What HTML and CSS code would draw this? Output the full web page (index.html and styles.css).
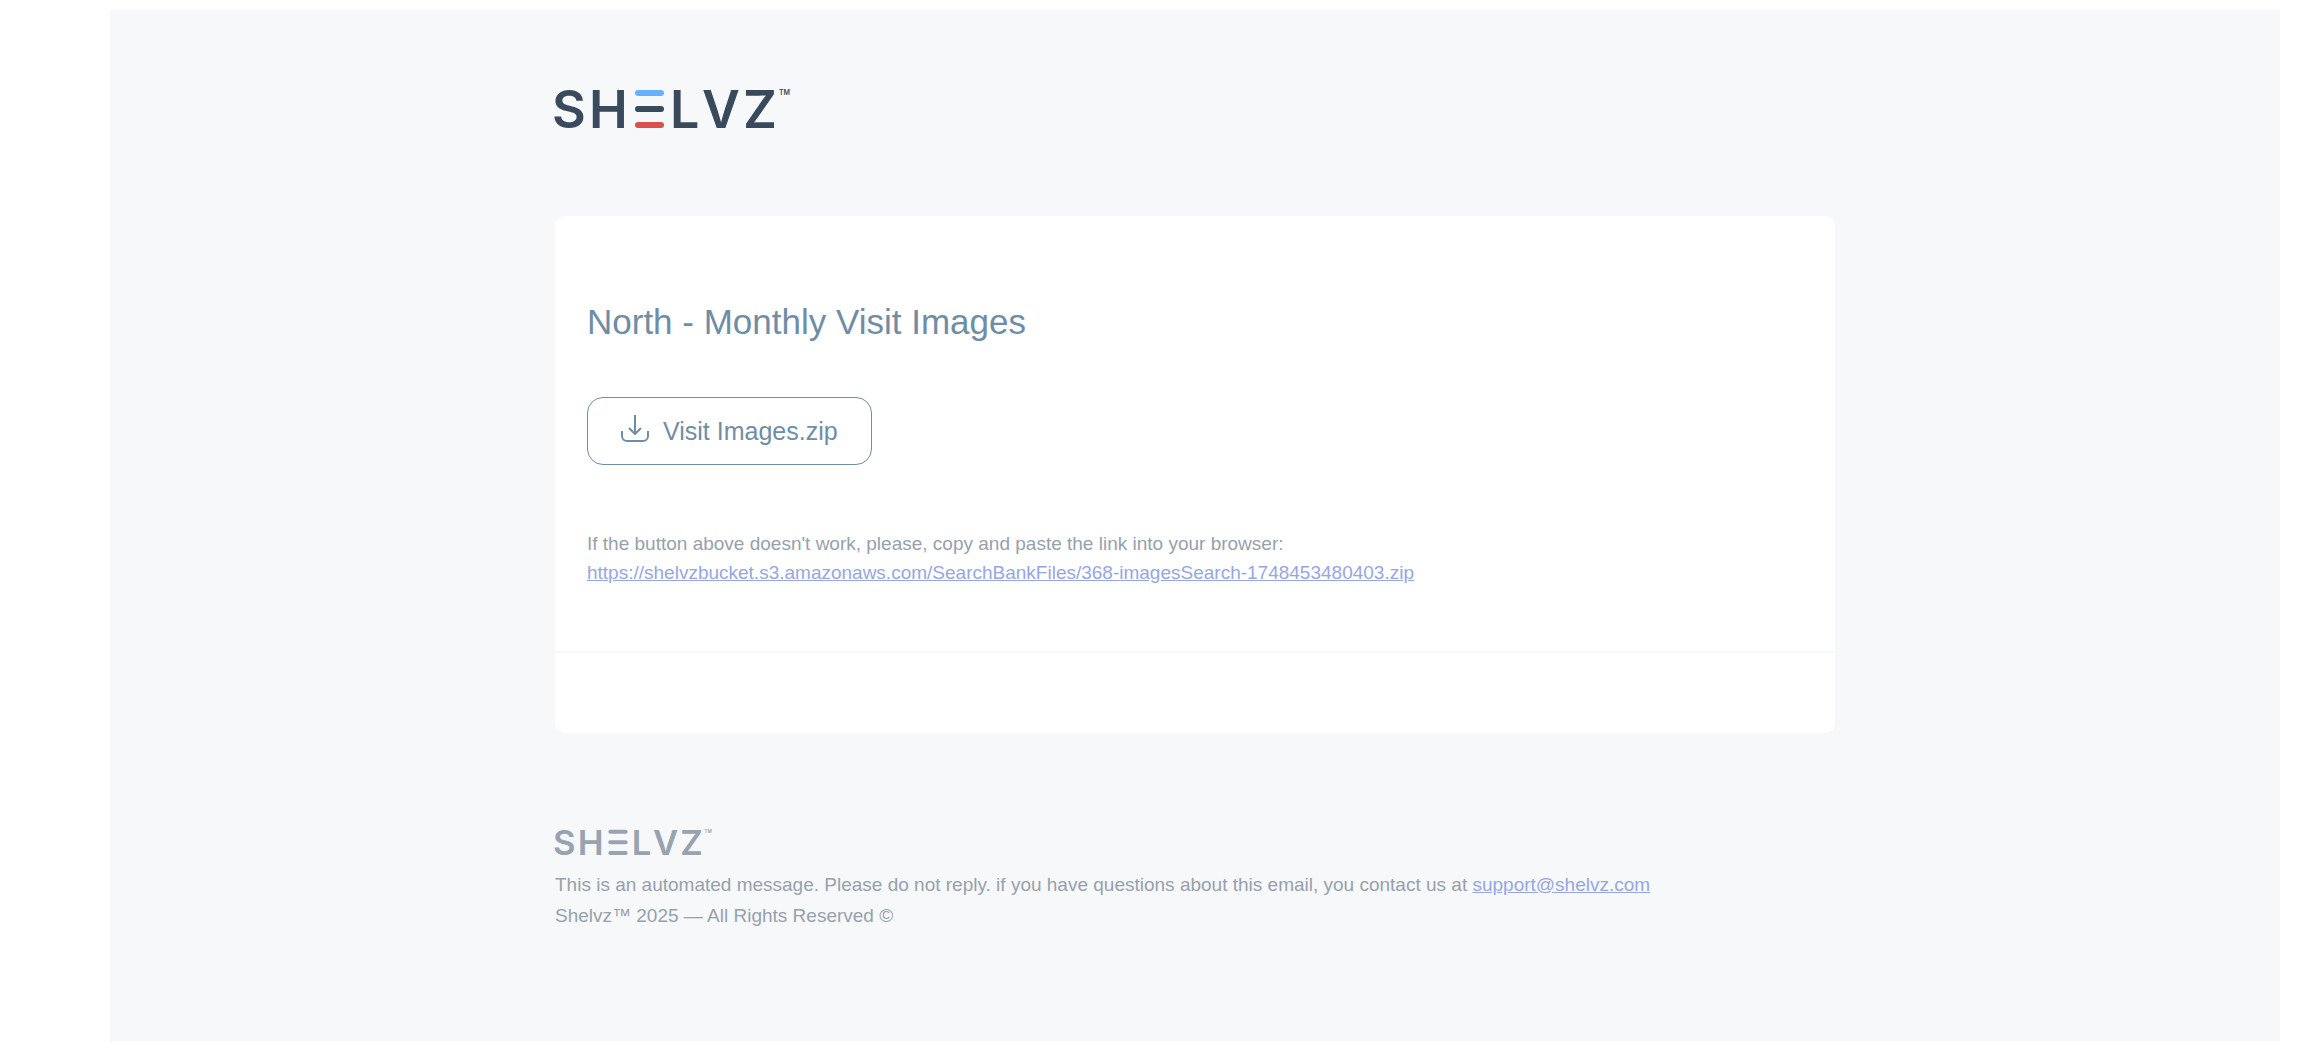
FILE: index.html
```html
<!DOCTYPE html>
<html lang="en">
<head>
  <meta charset="utf-8">
  <title>North - Monthly Visit Images</title>
  <link rel="stylesheet" href="styles.css">
</head>
<body>
  <div class="wrapper">
    <div class="container">
      <div class="header">
        <svg class="logo" viewBox="-3 -12 249 66" role="img" aria-label="Shelvz">
          <g class="logo-letters">
            <text x="-3" y="39">S</text>
            <text x="34" y="39">H</text>
            <text x="115" y="39">L</text>
            <text x="147" y="39">V</text>
            <text x="188" y="39">Z</text>
          </g>
          <rect class="bar-top" x="80" y="1" width="29" height="6" rx="3" />
          <rect class="bar-middle" x="80" y="17" width="29" height="6" rx="3" />
          <rect class="bar-bottom" x="80" y="33" width="29" height="6" rx="3" />
          <text class="logo-tm" x="224" y="6">TM</text>
        </svg>
      </div>

      <div class="card">
        <div class="card-body">
          <h1>North - Monthly Visit Images</h1>
          <a class="download" href="https://shelvzbucket.s3.amazonaws.com/SearchBankFiles/368-imagesSearch-1748453480403.zip">
            <svg class="download-icon" viewBox="0 0 28 28" aria-hidden="true">
              <path d="M14 1v19M8 14l6 6 6-6M1 17v5a5 5 0 0 0 5 5h16a5 5 0 0 0 5-5v-5" />
            </svg>
            <span>Visit Images.zip</span>
          </a>
          <p class="fallback">
            If the button above doesn't work, please, copy and paste the link into your browser:<br>
            <a href="https://shelvzbucket.s3.amazonaws.com/SearchBankFiles/368-imagesSearch-1748453480403.zip">https://shelvzbucket.s3.amazonaws.com/SearchBankFiles/368-imagesSearch-1748453480403.zip</a>
          </p>
        </div>
        <div class="card-footer"></div>
      </div>

      <div class="footer">
        <svg class="logo logo-small" viewBox="-3 -12 249 66" role="img" aria-label="Shelvz">
          <g class="logo-letters">
            <text x="-3" y="39">S</text>
            <text x="34" y="39">H</text>
            <text x="115" y="39">L</text>
            <text x="147" y="39">V</text>
            <text x="188" y="39">Z</text>
          </g>
          <rect x="80" y="1" width="29" height="6" rx="3" />
          <rect x="80" y="17" width="29" height="6" rx="3" />
          <rect x="80" y="33" width="29" height="6" rx="3" />
          <text class="logo-tm" x="224" y="6">TM</text>
        </svg>
        <p>This is an automated message. Please do not reply. if you have questions about this email, you contact us at <a href="mailto:support@shelvz.com">support@shelvz.com</a></p>
        <p>Shelvz™ 2025 — All Rights Reserved ©</p>
      </div>
    </div>
  </div>
</body>
</html>
```

FILE: styles.css
```css
:root {
  --background: #f7f8fa;
  --primary: #394a5d;
  --accent: #708da6;
  --text: #96a1ac;
  --logo-muted: #97a3ae;
  --link: #97a6e3;
}

body {
  margin: 0;
  padding: 10px 30px 15px 110px;
  background: white;
  font-family: Arial, 'Liberation Sans', sans-serif;
  font-size: 19px;
  color: var(--text);
}

.wrapper {
  background: var(--background);
  padding: 67px 24px 110px;
}

.container {
  max-width: 1280px;
  margin: 0 auto;
}

.header {
  padding-bottom: 73px;
}

.logo {
  display: block;
  width: 249px;
  height: 66px;
  margin-left: -3px;
}

.logo-letters {
  fill: var(--primary);
  font-family: Inter, sans-serif;
  font-size: 52px;
  font-weight: 600;
}

.logo-tm {
  fill: var(--primary);
  font-family: Inter, sans-serif;
  font-size: 7px;
  font-weight: 600;
}

.bar-top {
  fill: #66b2ff;
}

.bar-middle {
  fill: var(--primary);
}

.bar-bottom {
  fill: #d9504f;
}

.card {
  background: white;
  border-radius: 10px;
}

.card-body {
  padding: 85px 32px 64px;
}

h1 {
  margin: 0 0 54px;
  font-size: 35px;
  font-weight: 400;
  line-height: 42px;
  color: var(--accent);
}

.download {
  display: inline-flex;
  align-items: center;
  gap: 14px;
  padding: 16px 33px;
  border: 1px solid var(--accent);
  border-radius: 16px;
  font-size: 25px;
  line-height: 34px;
  color: var(--accent);
  text-decoration: none;
  vertical-align: top;
}

.download-icon {
  width: 28px;
  height: 28px;
  margin-bottom: 6px;
  fill: none;
  stroke: var(--accent);
  stroke-width: 2;
  stroke-linejoin: round;
}

.fallback {
  margin: 64px 0 0;
  line-height: 29px;
}

.fallback a,
.footer a {
  color: var(--link);
}

.card-footer {
  height: 80px;
  border-top: 2px solid var(--background);
}

.footer {
  padding-top: 88px;
}

.footer p {
  margin: 0;
  line-height: 31px;
}

.logo-small {
  width: 166px;
  height: 44px;
  margin-left: -2px;
  margin-bottom: 4px;
  fill: var(--logo-muted);
}

.logo-small .logo-letters,
.logo-small .logo-tm {
  fill: var(--logo-muted);
}
```
